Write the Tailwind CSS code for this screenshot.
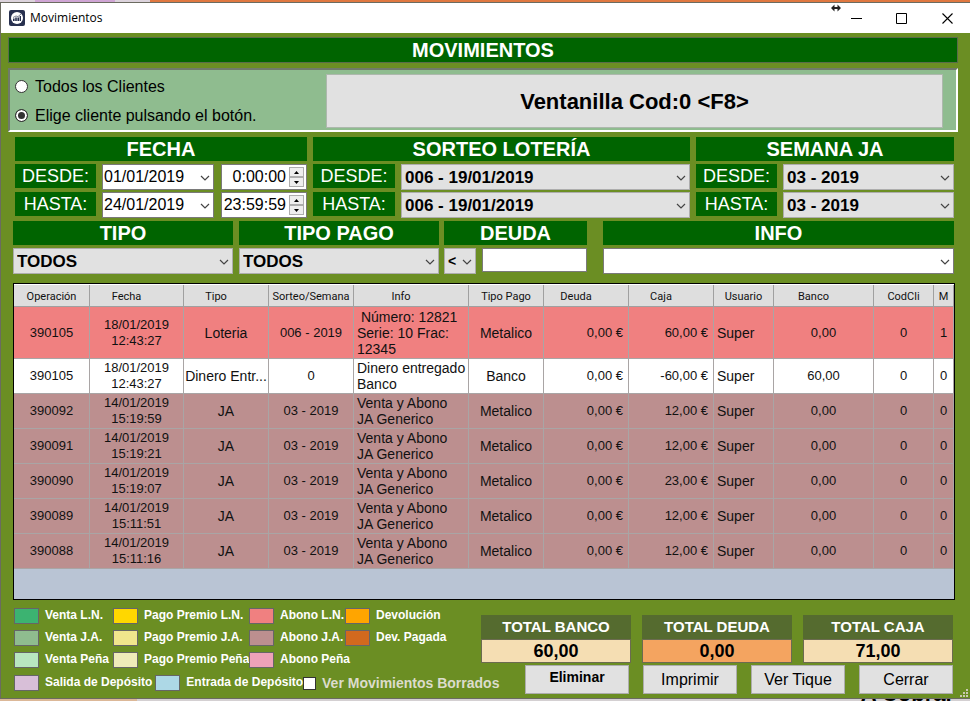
<!DOCTYPE html>
<html lang="es">
<head>
    <meta charset="UTF-8">
    <meta name="viewport" content="width=device-width, initial-scale=1.0">
    <title>Movimientos</title>
    <script src="https://cdn.jsdelivr.net/npm/@tailwindcss/browser@4"></script>
</head>
<body class="min-h-screen flex flex-col bg-[#d4d0d2] text-black font-['Liberation_Sans',Arial,sans-serif]">

<svg class="hidden">
    <symbol id="chevron" viewBox="0 0 10 6"><path d="M1 1l4 4 4-4" fill="none" stroke="#444" stroke-width="1.2"/></symbol>
</svg>

<!-- Fondo por encima de la ventana -->
<div class="flex h-[2px]">
    <div class="w-[150px] bg-[#dcd3dc] flex justify-center"><span class="w-[80px] bg-[#cfa5d4]"></span></div>
    <div class="flex-1 bg-[#e07840]"></div>
</div>

<div class="flex-1 flex flex-col bg-[#6b8e23] border-l border-t border-b border-[#6b6b60]">

    <!-- Barra de titulo -->
    <header class="relative flex items-center h-[30px] pl-2 bg-white">
        <svg class="w-4 h-4" viewBox="0 0 16 16">
            <rect width="16" height="16" rx="2" fill="#27304f"/>
            <circle cx="8" cy="8" r="6" fill="#fff"/>
            <path d="M4 8.500h1.600V11H4zM6.200 7.500h1.600V11H6.200zM8.400 7.500H10V11H8.400zM10.600 6h1.400v5h-1.400z" fill="#27304f"/>
            <path d="M4 7.500l3-1.500 2 .6 3-2.600" fill="none" stroke="#27304f" stroke-width=".6"/>
        </svg>
        <h1 class="ml-[5px] flex-1 text-[12px] font-['Open_Sans','Noto_Sans',sans-serif]">Movimientos</h1>
        <svg class="absolute right-[128px] top-0 w-3 h-[10px]" viewBox="0 0 12 10"><path d="M3 5h6" stroke="#222" stroke-width="2"/><path d="M4.500 1.500v7L1 5zM7.500 1.500v7L11 5z" fill="#222"/></svg>
        <button aria-label="Minimizar" class="w-[46px] h-full flex items-center justify-center"><svg class="w-[11px] h-[11px]" viewBox="0 0 11 11"><path d="M0 5.500h11" stroke="#000"/></svg></button>
        <button aria-label="Maximizar" class="w-[45px] h-full flex items-center justify-center"><svg class="w-[11px] h-[11px]" viewBox="0 0 11 11"><path d="M.5.5h10v10H.5z" fill="none" stroke="#000"/></svg></button>
        <button aria-label="Cerrar ventana" class="w-[46px] h-full flex items-center justify-center"><svg class="w-[11px] h-[11px]" viewBox="0 0 11 11"><path d="M.5.5l10 10M10.500.5l-10 10" stroke="#000" stroke-width="1.100"/></svg></button>
    </header>

    <main class="flex-1 flex flex-col pl-[7px] pr-3 pt-1">
        <h2 class="h-[26px] border border-[#5a6b4a] bg-[#006400] text-white text-[20px] leading-[24px] font-bold text-center">MOVIMIENTOS</h2>

        <!-- Cliente -->
        <section class="mt-[5px] h-[64px] flex border-2 border-t-[#6f7a6a] border-l-[#6f7a6a] border-r-white border-b-white bg-[#8fbc8f]">
            <div class="w-[316px] pl-[5px] pt-[2px] flex flex-col text-[16px]">
                <label class="flex items-center gap-[7px] h-[30px]">
                    <input type="radio" name="cliente" class="appearance-none w-[13px] h-[13px] rounded-full border border-[#333] bg-white checked:bg-[#333] checked:border-[#333] checked:shadow-[inset_0_0_0_2px_#fff]">
                    Todos los Clientes
                </label>
                <label class="flex items-center gap-[7px] h-[30px]">
                    <input type="radio" name="cliente" checked class="appearance-none w-[13px] h-[13px] rounded-full border border-[#333] bg-white checked:bg-[#333] checked:border-[#333] checked:shadow-[inset_0_0_0_2px_#fff]">
                    Elige cliente pulsando el botón.
                </label>
            </div>
            <button class="flex-1 mt-1 mr-[13px] h-[54px] border border-[#adb8ad] bg-[#e1e1e1] text-[22px] font-bold">Ventanilla Cod:0 &lt;F8&gt;</button>
        </section>

        <!-- Filtros por fecha, sorteo y semana -->
        <section class="mt-[5px] ml-[7px] mr-1 grid grid-cols-[292fr_377fr_258fr] gap-x-[6px] text-[16px]">
            <div>
                <h3 class="h-6 bg-[#006400] text-white text-[20px] leading-6 font-bold text-center">FECHA</h3>
                <div class="mt-[3px] flex h-[26px]">
                    <label for="fechaDesde" class="w-[81px] h-6 bg-[#006400] text-white text-[18px] leading-6 text-center">DESDE:</label>
                    <div class="relative ml-[6px] flex-1 min-w-0">
                        <input id="fechaDesde" type="text" value="01/01/2019" class="w-full h-[26px] pl-[1px] border border-[#7a7a7a] bg-white">
                        <svg class="absolute right-[4px] top-[11px] w-[10px] h-[6px] pointer-events-none"><use href="#chevron"/></svg>
                    </div>
                    <div class="ml-[7px] w-[86px] h-[26px] flex items-center border border-[#7a7a7a] bg-white">
                        <input type="text" aria-label="Hora desde" value="0:00:00" class="flex-1 min-w-0 pr-[3px] text-right">
                        <div class="flex flex-col w-[15px] mr-[2px]">
                            <button aria-label="Subir hora desde" class="h-[10px] border border-[#adadad] bg-[#eee] flex items-center justify-center"><svg class="w-[5px] h-[3px]" viewBox="0 0 5 3"><path d="M0 3l2.500-3L5 3z"/></svg></button>
                            <button aria-label="Bajar hora desde" class="h-[10px] border border-[#adadad] bg-[#eee] flex items-center justify-center"><svg class="w-[5px] h-[3px]" viewBox="0 0 5 3"><path d="M0 0l2.500 3L5 0z"/></svg></button>
                        </div>
                    </div>
                </div>
                <div class="mt-[2px] flex h-[26px]">
                    <label for="fechaHasta" class="w-[81px] h-6 bg-[#006400] text-white text-[18px] leading-6 text-center">HASTA:</label>
                    <div class="relative ml-[6px] flex-1 min-w-0">
                        <input id="fechaHasta" type="text" value="24/01/2019" class="w-full h-[26px] pl-[1px] border border-[#7a7a7a] bg-white">
                        <svg class="absolute right-[4px] top-[11px] w-[10px] h-[6px] pointer-events-none"><use href="#chevron"/></svg>
                    </div>
                    <div class="ml-[7px] w-[86px] h-[26px] flex items-center border border-[#7a7a7a] bg-white">
                        <input type="text" aria-label="Hora hasta" value="23:59:59" class="flex-1 min-w-0 pr-[3px] text-right">
                        <div class="flex flex-col w-[15px] mr-[2px]">
                            <button aria-label="Subir hora hasta" class="h-[10px] border border-[#adadad] bg-[#eee] flex items-center justify-center"><svg class="w-[5px] h-[3px]" viewBox="0 0 5 3"><path d="M0 3l2.500-3L5 3z"/></svg></button>
                            <button aria-label="Bajar hora hasta" class="h-[10px] border border-[#adadad] bg-[#eee] flex items-center justify-center"><svg class="w-[5px] h-[3px]" viewBox="0 0 5 3"><path d="M0 0l2.500 3L5 0z"/></svg></button>
                        </div>
                    </div>
                </div>
            </div>

            <div>
                <h3 class="h-6 bg-[#006400] text-white text-[20px] leading-6 font-bold text-center">SORTEO LOTERÍA</h3>
                <div class="mt-[3px] flex h-[26px]">
                    <label for="sorteoDesde" class="w-[82px] h-6 bg-[#006400] text-white text-[18px] leading-6 text-center">DESDE:</label>
                    <div class="relative ml-[6px] flex-1">
                        <select id="sorteoDesde" class="appearance-none w-full h-[26px] pl-[3px] border border-[#adadad] bg-[#e1e1e1] text-[17px] font-bold"><option>006 - 19/01/2019</option></select>
                        <svg class="absolute right-[4px] top-[11px] w-[10px] h-[6px] pointer-events-none"><use href="#chevron"/></svg>
                    </div>
                </div>
                <div class="mt-[2px] flex h-[26px]">
                    <label for="sorteoHasta" class="w-[82px] h-6 bg-[#006400] text-white text-[18px] leading-6 text-center">HASTA:</label>
                    <div class="relative ml-[6px] flex-1">
                        <select id="sorteoHasta" class="appearance-none w-full h-[26px] pl-[3px] border border-[#adadad] bg-[#e1e1e1] text-[17px] font-bold"><option>006 - 19/01/2019</option></select>
                        <svg class="absolute right-[4px] top-[11px] w-[10px] h-[6px] pointer-events-none"><use href="#chevron"/></svg>
                    </div>
                </div>
            </div>

            <div>
                <h3 class="h-6 bg-[#006400] text-white text-[20px] leading-6 font-bold text-center">SEMANA JA</h3>
                <div class="mt-[3px] flex h-[26px]">
                    <label for="semanaDesde" class="w-[81px] h-6 bg-[#006400] text-white text-[18px] leading-6 text-center">DESDE:</label>
                    <div class="relative ml-[6px] flex-1">
                        <select id="semanaDesde" class="appearance-none w-full h-[26px] pl-[3px] border border-[#adadad] bg-[#e1e1e1] text-[17px] font-bold"><option>03 - 2019</option></select>
                        <svg class="absolute right-[4px] top-[11px] w-[10px] h-[6px] pointer-events-none"><use href="#chevron"/></svg>
                    </div>
                </div>
                <div class="mt-[2px] flex h-[26px]">
                    <label for="semanaHasta" class="w-[81px] h-6 bg-[#006400] text-white text-[18px] leading-6 text-center">HASTA:</label>
                    <div class="relative ml-[6px] flex-1">
                        <select id="semanaHasta" class="appearance-none w-full h-[26px] pl-[3px] border border-[#adadad] bg-[#e1e1e1] text-[17px] font-bold"><option>03 - 2019</option></select>
                        <svg class="absolute right-[4px] top-[11px] w-[10px] h-[6px] pointer-events-none"><use href="#chevron"/></svg>
                    </div>
                </div>
            </div>
        </section>

        <!-- Filtros por tipo, pago, deuda e info -->
        <section class="mt-[3px] ml-[5px] mr-1 flex text-[17px]">
            <div class="flex-[220] min-w-0">
                <label for="tipo" class="block h-6 bg-[#006400] text-white text-[20px] leading-6 font-bold text-center">TIPO</label>
                <div class="relative mt-[3px]">
                    <select id="tipo" class="appearance-none block w-full h-[26px] pl-[3px] border border-[#adadad] bg-[#e1e1e1] font-bold"><option>TODOS</option></select>
                    <svg class="absolute right-[4px] top-[11px] w-[10px] h-[6px] pointer-events-none"><use href="#chevron"/></svg>
                </div>
            </div>
            <div class="ml-[6px] flex-[200] min-w-0">
                <label for="tipoPago" class="block h-6 bg-[#006400] text-white text-[20px] leading-6 font-bold text-center">TIPO PAGO</label>
                <div class="relative mt-[3px]">
                    <select id="tipoPago" class="appearance-none block w-full h-[26px] pl-[3px] border border-[#adadad] bg-[#e1e1e1] font-bold"><option>TODOS</option></select>
                    <svg class="absolute right-[4px] top-[11px] w-[10px] h-[6px] pointer-events-none"><use href="#chevron"/></svg>
                </div>
            </div>
            <div class="ml-[5px] flex-[143] min-w-0">
                <label for="deuda" class="block h-6 bg-[#006400] text-white text-[20px] leading-6 font-bold text-center">DEUDA</label>
                <div class="mt-[3px] flex gap-[6px]">
                    <div class="relative w-8">
                        <select aria-label="Comparador de deuda" class="appearance-none block w-full h-[26px] pl-[3px] border border-[#adadad] bg-[#e1e1e1] text-[14px] font-bold"><option>&lt;</option></select>
                        <svg class="absolute right-[4px] top-[11px] w-[10px] h-[6px] pointer-events-none"><use href="#chevron"/></svg>
                    </div>
                    <input id="deuda" type="text" class="flex-1 min-w-0 h-6 px-1 border border-[#7a7a7a] bg-white">
                </div>
            </div>
            <div class="ml-4 flex-[351] min-w-0">
                <label for="info" class="block h-6 bg-[#006400] text-white text-[20px] leading-6 font-bold text-center">INFO</label>
                <div class="relative mt-[3px]">
                    <select id="info" class="appearance-none block w-full h-[26px] pl-[3px] border border-[#7a7a7a] bg-white font-bold"><option></option></select>
                    <svg class="absolute right-[4px] top-[11px] w-[10px] h-[6px] pointer-events-none"><use href="#chevron"/></svg>
                </div>
            </div>
        </section>

        <!-- Tabla de movimientos -->
        <div class="mt-[9px] ml-[5px] mr-[3px] flex-1 border border-black bg-[#b9c4d4]">
            <table class="w-full table-fixed border-separate border-spacing-0 border-t border-white text-[14px] leading-4 text-[#111] [&_td]:border-r [&_td]:border-b [&_td]:border-[#a9a5a5] [&_td]:p-0 [&_td]:text-center">
                <colgroup>
                    <col class="w-[76px]"><col class="w-[94px]"><col class="w-[85px]"><col class="w-[85px]"><col class="w-[115px]"><col class="w-[75px]">
                    <col class="w-[85px]"><col class="w-[85px]"><col class="w-[60px]"><col class="w-[100px]"><col class="w-[60px]"><col class="w-[20px]">
                </colgroup>
                <thead class="h-[22px] bg-[#dedede] text-[11px] font-['Roboto','Open_Sans',sans-serif] [&_th]:p-0 [&_th]:pt-[2px] [&_th]:font-normal [&_th]:border-r [&_th]:border-b [&_th]:border-[#a0a0a0] [&_th]:whitespace-nowrap">
                    <tr>
                        <th>Operación</th>
                        <th><span class="pr-5">Fecha</span></th>
                        <th><span class="pr-5">Tipo</span></th>
                        <th>Sorteo/Semana</th>
                        <th><span class="pr-5">Info</span></th>
                        <th>Tipo Pago</th>
                        <th><span class="pr-5">Deuda</span></th>
                        <th><span class="pr-5">Caja</span></th>
                        <th>Usuario</th>
                        <th><span class="pr-5">Banco</span></th>
                        <th>CodCli</th>
                        <th>M</th>
                    </tr>
                </thead>
                <tbody id="movimientos"></tbody>
            </table>
        </div>

        <!-- Leyenda, totales y botones -->
        <footer class="ml-[6px] mr-[5px] flex">
            <div class="flex-1 min-w-0 pt-2 text-[12px] leading-[14px] font-bold text-white whitespace-nowrap [&_i]:shrink-0">
                <ul class="grid grid-cols-[99px_136px_96px_110px] gap-y-[6px] [&>li]:flex [&>li]:gap-[6px]">
                    <li><i class="w-[25px] h-4 border border-[#666] bg-[#3cb371]"></i>Venta L.N.</li>
                    <li><i class="w-[25px] h-4 border border-[#666] bg-[#ffd700]"></i>Pago Premio L.N.</li>
                    <li><i class="w-[25px] h-4 border border-[#666] bg-[#f08080]"></i>Abono L.N.</li>
                    <li><i class="w-[25px] h-4 border border-[#666] bg-[#ffa500]"></i>Devolución</li>
                    <li><i class="w-[25px] h-4 border border-[#666] bg-[#8fbc8f]"></i>Venta J.A.</li>
                    <li><i class="w-[25px] h-4 border border-[#666] bg-[#f0e68c]"></i>Pago Premio J.A.</li>
                    <li><i class="w-[25px] h-4 border border-[#666] bg-[#bc8f8f]"></i>Abono J.A.</li>
                    <li><i class="w-[25px] h-4 border border-[#666] bg-[#d2691e]"></i>Dev. Pagada</li>
                    <li><i class="w-[25px] h-4 border border-[#666] bg-[#b9e6c0]"></i>Venta Peña</li>
                    <li><i class="w-[25px] h-4 border border-[#666] bg-[#eeebb8]"></i>Pago Premio Peña</li>
                    <li><i class="w-[25px] h-4 border border-[#666] bg-[#eea2b8]"></i>Abono Peña</li>
                </ul>
                <div class="mt-[7px] flex">
                    <span class="flex gap-[6px]"><i class="w-[25px] h-4 border border-[#666] bg-[#d8bfd8]"></i>Salida de Depósito</span>
                    <span class="ml-[3px] flex gap-[6px]"><i class="w-[25px] h-4 border border-[#666] bg-[#add8e6]"></i>Entrada de Depósito</span>
                    <label class="flex items-center gap-[6px] text-[14px] text-[#dcdccc]">
                        <input type="checkbox" class="appearance-none shrink-0 w-[13px] h-[13px] border border-[#333] bg-white checked:bg-[#333]">
                        Ver Movimientos Borrados
                    </label>
                </div>
            </div>

            <div class="pt-[15px]">
                <div class="flex gap-[11px] text-center font-bold">
                    <div class="w-[150px]">
                        <h4 class="h-6 bg-[#556b2f] text-white text-[15px] leading-6">TOTAL BANCO</h4>
                        <p class="h-6 border border-[#6b6b50] bg-[#f5deb3] text-[18px] leading-[22px]">60,00</p>
                    </div>
                    <div class="w-[150px]">
                        <h4 class="h-6 bg-[#556b2f] text-white text-[15px] leading-6">TOTAL DEUDA</h4>
                        <p class="h-6 border border-[#6b6b50] bg-[#f4a460] text-[18px] leading-[22px]">0,00</p>
                    </div>
                    <div class="w-[150px]">
                        <h4 class="h-6 bg-[#556b2f] text-white text-[15px] leading-6">TOTAL CAJA</h4>
                        <p class="h-6 border border-[#6b6b50] bg-[#f5deb3] text-[18px] leading-[22px]">71,00</p>
                    </div>
                </div>
                <div class="mt-[2px] mb-1 flex justify-end gap-[14px] text-[16px]">
                    <button class="w-[104px] h-[29px] pb-1 border border-[#adadad] bg-[#e1e1e1] text-[14px] font-bold">Eliminar</button>
                    <button class="w-[94px] h-[29px] border border-[#adadad] bg-[#e1e1e1]">Imprimir</button>
                    <button class="w-[94px] h-[29px] border border-[#adadad] bg-[#e1e1e1]">Ver Tique</button>
                    <button class="w-[94px] h-[29px] border border-[#adadad] bg-[#e1e1e1]">Cerrar</button>
                </div>
            </div>
        </footer>
    </main>
</div>

<!-- Fondo por debajo de la ventana -->
<div class="relative flex h-[2px]">
    <div class="w-[137px] bg-[#dcb898]"></div>
    <div class="flex-1 flex justify-end items-end overflow-hidden pr-4 text-[22px] leading-[14px] font-bold">A Cobrar</div>
    <svg class="absolute right-[2px] bottom-[4px] w-2 h-2" viewBox="0 0 8 8"><path d="M6 0h2v2H6zM3 3h2v2H3zM6 3h2v2H6zM0 6h2v2H0zM3 6h2v2H3zM6 6h2v2H6z" fill="#c9c9b0"/></svg>
</div>

<script>
    const movimientos = [
        { color: 'bg-[#f08080]', alto: 'h-[52px]', op: '390105', fecha: '18/01/2019', hora: '12:43:27', tipo: 'Loteria', sorteo: '006 - 2019', info: '&nbsp;Número: 12821<br>Serie: 10 Frac:<br>12345', pago: 'Metalico', caja: '60,00 €', banco: '0,00', m: 1 },
        { color: 'bg-white', alto: 'h-[35px]', op: '390105', fecha: '18/01/2019', hora: '12:43:27', tipo: 'Dinero Entr...', sorteo: '0', info: 'Dinero entregado<br>Banco', pago: 'Banco', caja: '-60,00 €', banco: '60,00', m: 0 }
    ];

    [['390092', '15:19:59', '12,00 €'], ['390091', '15:19:21', '12,00 €'], ['390090', '15:19:07', '23,00 €'], ['390089', '15:11:51', '12,00 €'], ['390088', '15:11:16', '12,00 €']].forEach(([op, hora, caja]) => {
        movimientos.push({ color: 'bg-[#bc8f8f]', alto: 'h-[35px]', op, fecha: '14/01/2019', hora, tipo: 'JA', sorteo: '03 - 2019', info: 'Venta y Abono<br>JA Generico', pago: 'Metalico', caja, banco: '0,00', m: 0 });
    });

    document.getElementById('movimientos').innerHTML = movimientos.map(m => `
        <tr class="${m.color} ${m.alto}">
            <td class="text-[13px]">${m.op}</td>
            <td class="text-[13px]">${m.fecha}<br>${m.hora}</td>
            <td class="whitespace-nowrap">${m.tipo}</td>
            <td class="text-[13px]">${m.sorteo}</td>
            <td><div class="pl-[3px] text-left whitespace-nowrap">${m.info}</div></td>
            <td>${m.pago}</td>
            <td class="text-[13px]"><div class="pr-[5px] text-right">0,00 €</div></td>
            <td class="text-[13px]"><div class="pr-[5px] text-right">${m.caja}</div></td>
            <td><div class="pl-[3px] text-left">Super</div></td>
            <td class="text-[13px]">${m.banco}</td>
            <td class="text-[13px]">0</td>
            <td class="text-[13px]">${m.m}</td>
        </tr>`).join('');
</script>
</body>
</html>
